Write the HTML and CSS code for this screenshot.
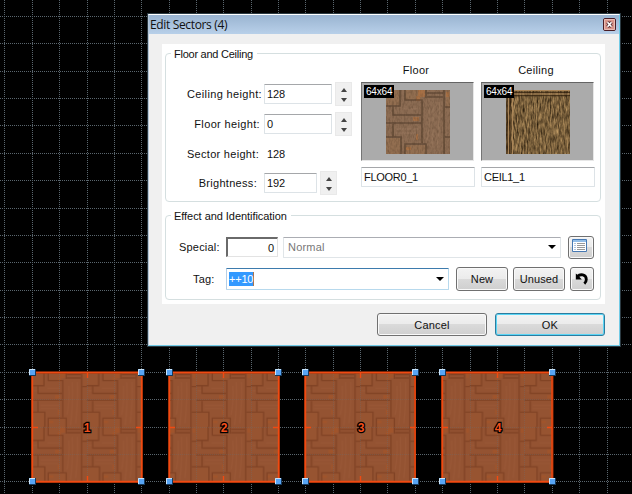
FILE: index.html
```html
<!DOCTYPE html>
<html lang="en">
<head>
<meta charset="utf-8">
<title>Edit Sectors</title>
<link rel="stylesheet" href="styles.css">
</head>
<body>
<svg class="map" width="632" height="494" viewBox="0 0 632 494">
  <defs>
    <filter id="grain" x="0" y="0" width="100%" height="100%" color-interpolation-filters="sRGB">
      <feTurbulence type="fractalNoise" baseFrequency="0.6 0.25" numOctaves="2" seed="4" result="n"/>
      <feColorMatrix in="n" type="matrix" values="0 0 0 0 0.3  0 0 0 0 0.22  0 0 0 0 0.15  2 0 0 0 -0.8"/>
    </filter>
    <filter id="bark" x="0" y="0" width="100%" height="100%" color-interpolation-filters="sRGB">
      <feTurbulence type="fractalNoise" baseFrequency="0.7 0.13" numOctaves="3" seed="9" result="n"/>
      <feColorMatrix in="n" type="matrix" values=".72 0 0 0 0.11  .6 0 0 0 0.07  .42 0 0 0 0.02  0 0 0 0 1"/>
    </filter>
    <g id="planks">
      <path class="wood" d="M0 0h64v64H0z"/>
      <path class="block" d="M0 0h14v15H0zM19 0h17v10H19zM0 48h14v16H0zM19 55h21v9H19zM60 0h4v17h-4z"/>
      <path class="orange" d="M32 0h7v7h-5v4h-4V6h2zM27 27h6v4h-6zM30 44h2v6h-2zM20 57h5v3h-5zM60 2h3v5h-3z"/>
      <path class="seam" d="M0 16h14V0M19 0v10h17v43M7 16v9h28M0 33h35M7 34v13M0 47h15v17M19 64V54h21v10M58 0v64M41 3h16M41 7h16M59 17h5M59 47h5M40 0v8"/>
      <path class="streak" d="M45 62q3-20 2-50M41 50q3-16 2-34M51 60q3-26 2-48M2 22h4M10 39h22M10 43h20M18 19h14"/>
    </g>
    <pattern id="floor" x="32" y="372" width="54.7" height="54.7" patternUnits="userSpaceOnUse">
      <use href="#planks" transform="scale(.8547)"/>
    </pattern>
    <g id="vertex">
      <path class="vertex-edge" d="M-3-3h7v7h-7z"/>
      <path class="vertex-face" d="M-3-3h6v6h-6z"/>
      <path class="vertex-light" d="M-2.500 3v-5.500h5.500"/>
    </g>
    <g id="grid">
      <path d="M4.500 0v494M32.500 0v494M59.500 0v494M87.500 0v494M114.500 0v494M141.500 0v494M169.500 0v494M196.500 0v494M223.500 0v494M251.500 0v494M278.500 0v494M305.500 0v494M333.500 0v494M360.500 0v494M387.500 0v494M415.500 0v494M442.500 0v494M470.500 0v494M497.500 0v494M524.500 0v494M552.500 0v494M579.500 0v494M607.500 0v494"/>
      <path d="M0 16.500h632M0 43.500h632M0 71.500h632M0 98.500h632M0 125.500h632M0 153.500h632M0 180.500h632M0 208.500h632M0 235.500h632M0 262.500h632M0 290.500h632M0 317.500h632M0 344.500h632M0 372.500h632M0 399.500h632M0 427.500h632M0 454.500h632M0 481.500h632"/>
    </g>
  </defs>
  <use href="#grid" class="grid"/>
  <path class="sector-base" d="M32 372h110v110H32zM169 372h110v110H169zM305 372h110v110H305zM442 372h110v110H442z"/>
  <path fill="url(#floor)" d="M32 372h110v110H32zM169 372h110v110H169zM305 372h110v110H305zM442 372h110v110H442z"/>
  <path class="tint" d="M32 372h110v110H32zM169 372h110v110H169zM305 372h110v110H305zM442 372h110v110H442z"/>
  <use href="#grid" class="grid grid-faint"/>
  <path class="outline-dim" d="M32 372.500h110v109.500H32zM169 372.500h110v109.500H169zM305 372.500h110v109.500H305zM442 372.500h110.500v109.500H442z"/>
  <path class="outline" d="M32.500 372.500h109v109H32.500zM169.500 372.500h109v109H169.500zM305.500 372.500h109.500v109H305.500zM442.500 372.500h109.500v109H442.500zM87.500 373v5M87.500 481v-5M33 427.500h5M141 427.500h-5M223.500 373v5M223.500 481v-5M170 427.500h5M278 427.500h-5M360.500 373v5M360.500 481v-5M306 427.500h5M415 427.500h-5M497.500 373v5M497.500 481v-5M443 427.500h5M552 427.500h-5"/>
  <g class="sector-no">
    <text x="87" y="432">1</text><text x="224" y="432">2</text><text x="361" y="432">3</text><text x="498" y="432">4</text>
  </g>
  <g>
    <use href="#vertex" x="32" y="372"/><use href="#vertex" x="141" y="372"/><use href="#vertex" x="32" y="481"/><use href="#vertex" x="141" y="481"/>
    <use href="#vertex" x="169" y="372"/><use href="#vertex" x="278" y="372"/><use href="#vertex" x="169" y="481"/><use href="#vertex" x="278" y="481"/>
    <use href="#vertex" x="305" y="372"/><use href="#vertex" x="415" y="372"/><use href="#vertex" x="305" y="481"/><use href="#vertex" x="415" y="481"/>
    <use href="#vertex" x="442" y="372"/><use href="#vertex" x="552" y="372"/><use href="#vertex" x="442" y="481"/><use href="#vertex" x="552" y="481"/>
  </g>
</svg>

<main class="dialog">
  <header class="titlebar">
    <span class="title">Edit Sectors (4)</span>
    <svg class="close" width="13" height="13" viewBox="0 0 13 13"><rect class="close-bg" x=".5" y=".5" width="12" height="12" rx="1.500"/><path class="close-shine" d="M1.500 1.500h10v10h-10z"/><path class="close-edge" d="M4.500 4.200l4 4.600M8.500 4.200l-4 4.600"/><path class="close-x" d="M4.500 4.200l4 4.600M8.500 4.200l-4 4.600"/></svg>
  </header>
  <div class="panel">
    <section class="group group-floor">
      <h2 class="legend">Floor and Ceiling</h2>
      <div class="columns">
        <div class="fields">
          <div class="row r-ceil"><label>Ceiling height:</label><span class="input">128</span><span class="spin"><i class="up"></i><i class="down"></i></span></div>
          <div class="row r-floor"><label>Floor height:</label><span class="input">0</span><span class="spin"><i class="up"></i><i class="down"></i></span></div>
          <div class="row r-sector"><label>Sector height:</label><span class="value">128</span></div>
          <div class="row r-bright"><label>Brightness:</label><span class="input short">192</span><span class="spin"><i class="up"></i><i class="down"></i></span></div>
        </div>
        <div class="texture">
          <h3>Floor</h3>
          <div class="preview"><svg width="64" height="64" viewBox="0 0 64 64"><use href="#planks"/><rect width="64" height="64" filter="url(#grain)" opacity=".4"/></svg><b class="size">64x64</b></div>
          <span class="input name">FLOOR0_1</span>
        </div>
        <div class="texture">
          <h3>Ceiling</h3>
          <div class="preview"><svg width="64" height="64" viewBox="0 0 64 64"><rect width="64" height="64" filter="url(#bark)"/><path class="trim-dark" d="M0 2.500h64M4 64V3M1 64V1M0 5.500h64"/><path class="trim-light" d="M2.500 64V4M6.500 64V7M0 .5h64M3 4h61"/></svg><b class="size">64x64</b></div>
          <span class="input name">CEIL1_1</span>
        </div>
      </div>
    </section>
    <section class="group group-effect">
      <h2 class="legend legend-effect">Effect and Identification</h2>
      <div class="line line-special">
        <label class="l-special">Special:</label><span class="sunken">0</span>
        <span class="combo special">Normal<i class="caret"></i></span>
        <span class="button browse"><svg width="16" height="14" viewBox="0 0 16 14"><path class="list-page" d="M.5.5h14v12H.5z"/><path class="list-head" d="M1 1h13v2H1z"/><path class="list-dots" d="M2.500 4.500h1M2.500 6.500h1M2.500 8.500h1M2.500 10.500h1"/><path class="list-lines" d="M5 4.500h8M5 6.500h8M5 8.500h8M5 10.500h8"/></svg></span>
      </div>
      <div class="line line-tag">
        <label class="l-tag">Tag:</label>
        <span class="combo tag"><mark>++10</mark><i class="caret"></i></span>
        <span class="button new">New</span><span class="button unused">Unused</span>
        <span class="button undo"><svg width="14" height="14" viewBox="0 0 14 14"><path class="undo-head" d="M.8 7.500V1.500l2 1.500 4 4.500z"/><path class="undo-line" d="M2.500 4.500C5 1.700 11.300 2 11.300 7.500c0 1.900-.5 3-2 4.200"/></svg></span>
      </div>
    </section>
  </div>
  <footer class="actions"><span class="button cancel">Cancel</span><span class="button ok">OK</span></footer>
</main>
</body>
</html>
```
FILE: styles.css
```css
* { box-sizing: border-box; }
body { margin: 0; width: 632px; height: 494px; overflow: hidden; position: relative; background: #000; color: #111; font: 11px/14px "Liberation Sans", Arial, sans-serif; }
h2, h3 { margin: 0; font-size: 11px; font-weight: normal; }

/* Map canvas */
.map { display: block; }
.grid { fill: none; stroke: #66727c; stroke-width: 1; stroke-dasharray: 1 1; opacity: .85; }
.grid-faint { opacity: .3; }
.sector-base, .wood { fill: #8c6c53; }
.block { fill: #926e50; }
.orange { fill: #b0713f; opacity: .65; }
.seam { fill: none; stroke: #57402e; stroke-width: 1.6; opacity: .7; }
.streak { fill: none; stroke: #a58467; stroke-width: 1.5; opacity: .35; }
.tint { fill: #9b3a12; opacity: .5; }
.outline-dim { fill: none; stroke: #a33008; stroke-width: 2; }
.outline { fill: none; stroke: #f04a12; stroke-width: 1.4; }
.vertex-edge { fill: #173a5c; }
.vertex-face { fill: #58a5f5; }
.vertex-light { fill: none; stroke: #c9e4fb; stroke-width: 1; }
.sector-no { font: bold 12px "Liberation Sans", Arial, sans-serif; text-anchor: middle; fill: #f4501c; stroke: #000; stroke-width: 2.5px; paint-order: stroke; }

/* Window */
.dialog { position: absolute; left: 148px; top: 14px; width: 472px; height: 332px; display: flex; flex-direction: column; background: #f0f0f0; border: 1px solid; border-color: #fff #72cbe6 #72cbe6 #b4c6d8; box-shadow: 0 0 0 1px #2b3a42; }
.titlebar { height: 19px; padding: 0 3px 0 1px; display: flex; align-items: center; justify-content: space-between; background: linear-gradient(#9ab4d1, #b8d0e9); }
.title { font: 12px/18px "Open Sans", "Noto Sans", sans-serif; letter-spacing: -.35px; }
.close-bg { fill: #d9958a; stroke: #4a1d25; }
.close-shine { fill: none; stroke: #e9bcb4; }
.close-edge { stroke: #5a3035; stroke-width: 3.400; }
.close-x { stroke: #fff; stroke-width: 1.600; }
.panel { width: 443px; height: 260px; margin: 10px 0 0 13px; padding: 9px 4px 0 3px; background: #fff; }
.group { position: relative; border: 1px solid #d5dfe0; border-radius: 4px; }
.group-floor { height: 149px; }
.group-effect { height: 85px; margin-top: 13px; }
.legend { position: absolute; left: 5px; top: -7px; padding: 0 4px 0 3px; background: #fff; letter-spacing: -.25px; }
.legend-effect { letter-spacing: -.05px; }

.columns { display: flex; }
.fields { width: 195px; flex-shrink: 0; padding-top: 28px; }
.row { display: flex; align-items: center; height: 24px; margin-bottom: 6px; }
.row label { width: 98px; padding-right: 2px; text-align: right; letter-spacing: .35px; white-space: nowrap; }
.r-floor label { padding-right: 4px; }
.r-sector label { padding-right: 5px; letter-spacing: .3px; }
.r-bright label { padding-right: 7px; letter-spacing: .3px; }
.r-sector { margin-bottom: 5px; }
.value { margin-left: 3px; }
.input { width: 68px; height: 20px; padding: 2px 2px; border: 1px solid #dde3e7; border-top-color: #a5a7aa; border-radius: 1px; background: #fff; }
.row .input, .value { letter-spacing: -.1px; }
.row .short { width: 53px; }
.spin { width: 17px; height: 24px; margin-left: 3px; padding: 5px 0 3px; display: flex; flex-direction: column; align-items: center; justify-content: space-between; background: #f0f0f0; border: 1px solid #e9e9e9; }
.up, .down, .caret { width: 0; height: 0; border: 3px solid transparent; }
.up { border-width: 0 3px 4px; border-bottom-color: #444; }
.down { border-width: 4px 3px 0; border-top-color: #444; }
.texture { width: 114px; flex-shrink: 0; margin-right: 6px; padding-top: 9px; }
.texture h3 { text-align: center; letter-spacing: .3px; padding-right: 4px; }
.preview { position: relative; width: 113px; height: 79px; margin: 5px 0 6px; padding: 7px 0 0 24px; background: #ababab; border: 1px solid #e7e7e7; border-top-color: #646464; border-left-color: #757575; }
.preview svg { display: block; }
.size { position: absolute; left: 2px; top: 2px; width: 30px; height: 13px; padding-left: 2px; background: #000; color: #fff; font: 10px/13px "Liberation Sans", sans-serif; letter-spacing: -.2px; }
.name { display: block; width: 114px; letter-spacing: -.3px; }
.trim-dark { fill: none; stroke: #33210f; stroke-width: 1.5; opacity: .75; }
.trim-light { fill: none; stroke: #aa8558; stroke-width: 1; }

.line { display: flex; align-items: center; height: 24px; }
.line-special { margin-top: 19px; }
.line-tag { margin-top: 8px; }
.line label { letter-spacing: .2px; }
.l-special { width: 60px; padding-left: 13px; }
.l-tag { width: 60px; padding-left: 27px; }
.sunken { width: 52px; height: 20px; margin-right: 5px; padding: 2px 3px; text-align: right; border: 1px solid #e3e3e3; border-top: 2px solid #6a6a6a; border-left: 2px solid #6a6a6a; line-height: 15px; }
.combo { display: flex; align-items: center; justify-content: space-between; background: #fff; border: 1px solid #e0e5e8; border-top-color: #abadb3; border-radius: 1px; padding-right: 4px; }
.caret { border-width: 4px 4px 0; border-top-color: #000; }
.special { width: 278px; height: 21px; padding-left: 4px; color: #777; letter-spacing: .2px; margin-right: 7px; }
.tag { width: 223px; height: 22px; margin-right: 7px; padding-left: 2px; border-color: #3d7bad #b7d9ed #b7d9ed #b5cfe7; }
mark { height: 14px; background: #3399ff; color: #fff; border-right: 1px solid #a87650; letter-spacing: -.2px; }
.button { display: flex; align-items: center; justify-content: center; height: 24px; border: 1px solid #707070; border-radius: 3px; background: linear-gradient(#f3f3f3, #ebebeb 50%, #dadada 50%, #cfcfcf); box-shadow: inset 0 0 0 1px #f9f9f9; letter-spacing: .1px; }
.browse { width: 26px; height: 23px; padding-right: 2px; padding-bottom: 2px; }
.new { width: 52px; margin-right: 5px; }
.unused { width: 52px; margin-right: 5px; }
.undo { width: 24px; }
.list-page { fill: #fff; stroke: #4779b3; }
.list-head { fill: #92bde7; }
.list-dots { stroke: #5e8bc0; }
.list-lines { stroke: #999; }
.undo-line { fill: none; stroke: #000; stroke-width: 2.800; }
.undo-head { fill: #000; }
.actions { display: flex; margin: 9px 0 0 228px; gap: 8px; }
.actions .button { width: 110px; height: 23px; letter-spacing: .2px; }
.actions .ok { border-color: #2c7c9f; box-shadow: inset 0 0 0 1px #5ad5f5; }
```
